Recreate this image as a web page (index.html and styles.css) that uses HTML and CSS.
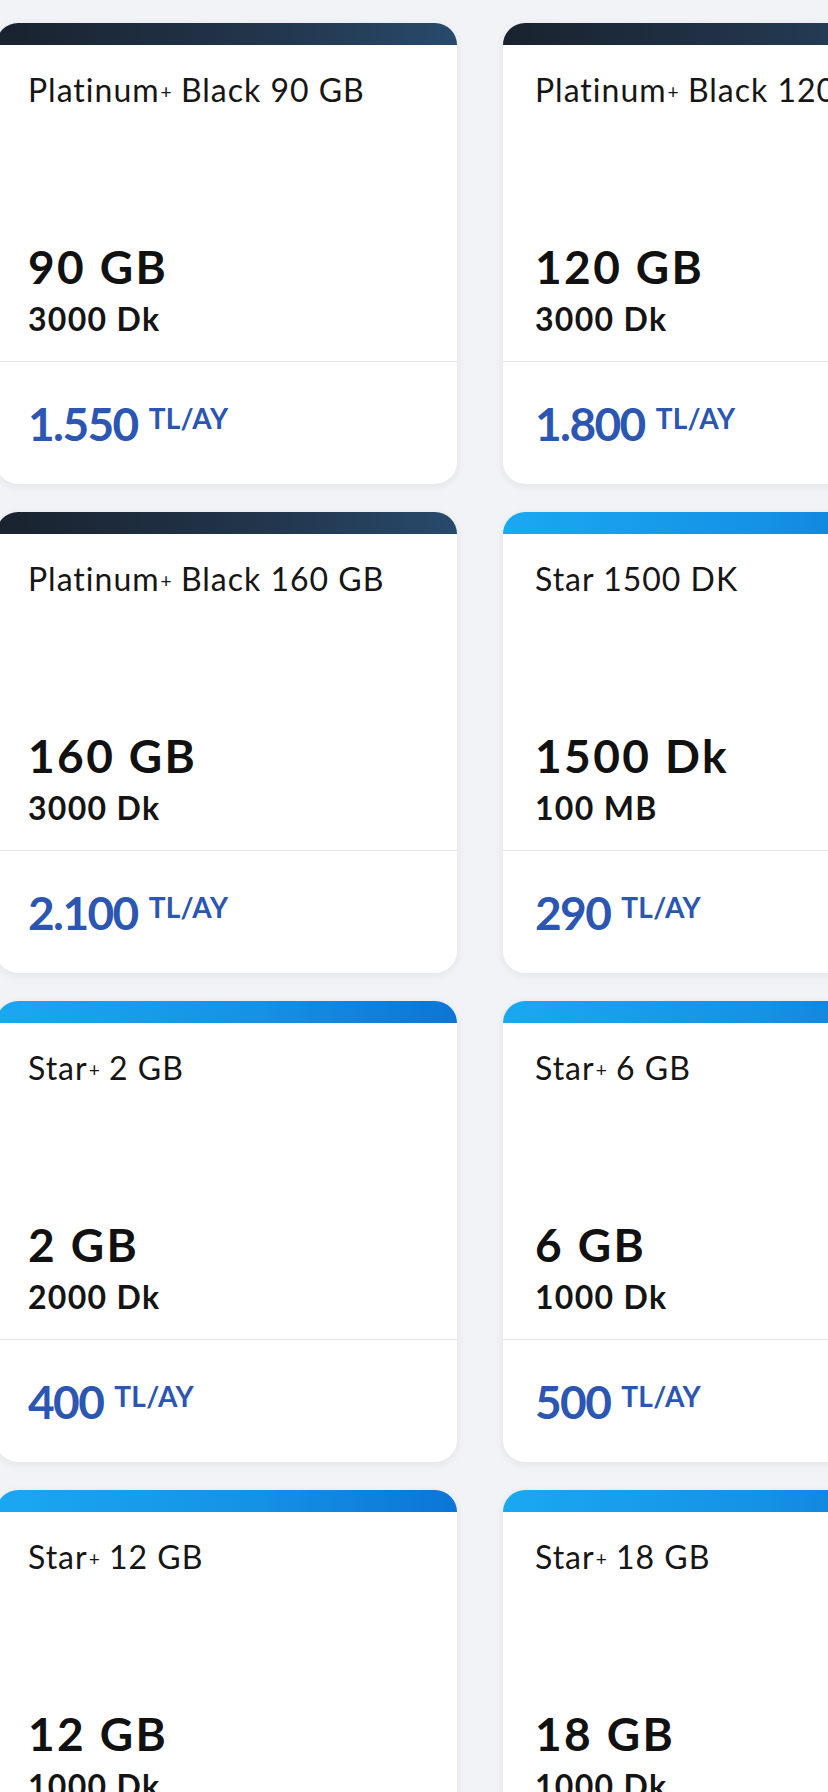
FILE: index.html
```html
<!DOCTYPE html>
<html lang="tr">
<head>
<meta charset="utf-8">
<title>Tarifeler</title>
<link rel="stylesheet" href="styles.css">
</head>
<body>
<main class="grid">
  <article class="card card--black">
    <div class="card__bar"></div>
    <div class="card__body">
      <h3 class="card__title">Platinum<span class="plus">+</span> Black 90 GB</h3>
      <div class="card__stats">
        <div class="card__main">90 GB</div>
        <div class="card__sub">3000 Dk</div>
      </div>
    </div>
    <div class="card__price"><span class="amount">1.550</span><span class="unit">TL/AY</span></div>
  </article>
  <article class="card card--black">
    <div class="card__bar"></div>
    <div class="card__body">
      <h3 class="card__title">Platinum<span class="plus">+</span> Black 120 GB</h3>
      <div class="card__stats">
        <div class="card__main">120 GB</div>
        <div class="card__sub">3000 Dk</div>
      </div>
    </div>
    <div class="card__price"><span class="amount">1.800</span><span class="unit">TL/AY</span></div>
  </article>

  <article class="card card--black">
    <div class="card__bar"></div>
    <div class="card__body">
      <h3 class="card__title">Platinum<span class="plus">+</span> Black 160 GB</h3>
      <div class="card__stats">
        <div class="card__main">160 GB</div>
        <div class="card__sub">3000 Dk</div>
      </div>
    </div>
    <div class="card__price"><span class="amount">2.100</span><span class="unit">TL/AY</span></div>
  </article>
  <article class="card card--star">
    <div class="card__bar"></div>
    <div class="card__body">
      <h3 class="card__title">Star 1500 DK</h3>
      <div class="card__stats">
        <div class="card__main">1500 Dk</div>
        <div class="card__sub">100 MB</div>
      </div>
    </div>
    <div class="card__price"><span class="amount">290</span><span class="unit">TL/AY</span></div>
  </article>

  <article class="card card--star">
    <div class="card__bar"></div>
    <div class="card__body">
      <h3 class="card__title">Star<span class="plus">+</span> 2 GB</h3>
      <div class="card__stats">
        <div class="card__main">2 GB</div>
        <div class="card__sub">2000 Dk</div>
      </div>
    </div>
    <div class="card__price"><span class="amount">400</span><span class="unit">TL/AY</span></div>
  </article>
  <article class="card card--star">
    <div class="card__bar"></div>
    <div class="card__body">
      <h3 class="card__title">Star<span class="plus">+</span> 6 GB</h3>
      <div class="card__stats">
        <div class="card__main">6 GB</div>
        <div class="card__sub">1000 Dk</div>
      </div>
    </div>
    <div class="card__price"><span class="amount">500</span><span class="unit">TL/AY</span></div>
  </article>

  <article class="card card--star">
    <div class="card__bar"></div>
    <div class="card__body">
      <h3 class="card__title">Star<span class="plus">+</span> 12 GB</h3>
      <div class="card__stats">
        <div class="card__main">12 GB</div>
        <div class="card__sub">1000 Dk</div>
      </div>
    </div>
    <div class="card__price"><span class="amount">600</span><span class="unit">TL/AY</span></div>
  </article>
  <article class="card card--star">
    <div class="card__bar"></div>
    <div class="card__body">
      <h3 class="card__title">Star<span class="plus">+</span> 18 GB</h3>
      <div class="card__stats">
        <div class="card__main">18 GB</div>
        <div class="card__sub">1000 Dk</div>
      </div>
    </div>
    <div class="card__price"><span class="amount">700</span><span class="unit">TL/AY</span></div>
  </article>
</main>
</body>
</html>
```
FILE: styles.css
```css
html, body {
  margin: 0;
  padding: 0;
}
body {
  background: #f2f3f6;
  font-family: Lato, "Open Sans", "Liberation Sans", sans-serif;
  color: #141414;
  overflow: hidden;
  width: 828px;
  height: 1792px;
}
.grid {
  display: grid;
  grid-template-columns: 461px 461px;
  column-gap: 46px;
  row-gap: 28px;
  padding-top: 23px;
  margin-left: -4px;
  width: 968px;
}
.card {
  height: 461px;
  background: #ffffff;
  border-radius: 22px;
  box-shadow: 0 2px 8px rgba(30, 40, 70, 0.08);
  display: flex;
  flex-direction: column;
  overflow: hidden;
}
.card__bar {
  height: 22px;
  flex: none;
}
.card--black .card__bar {
  background: linear-gradient(90deg, #19222e 0%, #22364d 60%, #284a6c 100%);
}
.card--star .card__bar {
  background: linear-gradient(90deg, #1aa8f1 0%, #1592e6 55%, #0b75d6 100%);
}
.card__body {
  flex: none;
  height: 317px;
  box-sizing: border-box;
  padding: 26px 20px 23px 32px;
  display: flex;
  flex-direction: column;
  justify-content: space-between;
  border-bottom: 1px solid #e4e6ec;
}
.card__title {
  margin: 0;
  font-size: 32px;
  line-height: 38px;
  font-weight: 400;
  letter-spacing: 1px;
  color: #161616;
  white-space: nowrap;
}
.plus {
  font-size: 0.6em;
  vertical-align: 0.14em;
  margin-left: 1px;
  letter-spacing: 0;
}
.card__main {
  font-size: 46px;
  line-height: 52px;
  font-weight: 700;
  letter-spacing: 2.4px;
  color: #111111;
}
.card__sub {
  margin-top: 7px;
  font-size: 32px;
  line-height: 38px;
  font-weight: 700;
  letter-spacing: 1.3px;
  color: #141414;
}
.card__price {
  flex: 1;
  padding: 36px 20px 0 32px;
  display: flex;
  align-items: flex-start;
  color: #2b56b2;
}
.amount {
  font-size: 46px;
  line-height: 52px;
  font-weight: 700;
  letter-spacing: -1.6px;
}
.unit {
  font-size: 28px;
  line-height: 34px;
  font-weight: 700;
  margin-left: 11px;
  margin-top: 3px;
  letter-spacing: 0.3px;
}
```
